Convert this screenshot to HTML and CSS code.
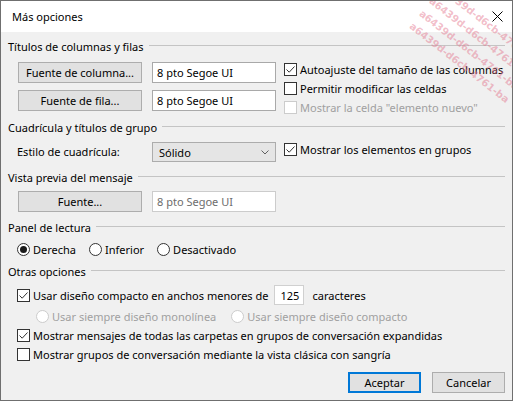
FILE: index.html
```html
<!DOCTYPE html>
<html lang="es">
<head>
<meta charset="utf-8">
<title>Más opciones</title>
<link rel="stylesheet" href="styles.css">
</head>
<body>
<div class="window">
  <div class="titlebar">
    <span class="title">Más opciones</span>
    <svg class="close" width="11" height="11" viewBox="0 0 11 11"><path d="M0.5 0.5 L10.5 10.5 M10.5 0.5 L0.5 10.5" stroke="#000" stroke-width="1" fill="none"/></svg>
  </div>
  <div class="content">
    <div class="group-h h1"><span>Títulos de columnas y filas</span><i class="rule"></i></div>
    <div class="sec1">
      <div class="fontgrid">
        <div class="btn">Fuente de columna...</div>
        <div class="tb">8 pto Segoe UI</div>
        <div class="btn">Fuente de fila...</div>
        <div class="tb">8 pto Segoe UI</div>
      </div>
      <div class="checks">
        <div class="chk"><span class="box"><svg viewBox="0 0 11 11" width="11" height="11"><polyline points="1.5,5.5 4.2,8.2 9.5,2.5" fill="none" stroke="#333" stroke-width="1"/></svg></span>Autoajuste del tamaño de las columnas</div>
        <div class="chk"><span class="box"></span>Permitir modificar las celdas</div>
        <div class="chk disabled"><span class="box"></span>Mostrar la celda "elemento nuevo"</div>
      </div>
    </div>

    <div class="group-h h2"><span>Cuadrícula y títulos de grupo</span><i class="rule"></i></div>
    <div class="sec2">
      <span class="lbl">Estilo de cuadrícula:</span>
      <div class="combo"><span>Sólido</span><svg width="8" height="5" viewBox="0 0 8 5"><polyline points="0.5,0.5 4,4 7.5,0.5" fill="none" stroke="#606060" stroke-width="1"/></svg></div>
      <div class="chk"><span class="box"><svg viewBox="0 0 11 11" width="11" height="11"><polyline points="1.5,5.5 4.2,8.2 9.5,2.5" fill="none" stroke="#333" stroke-width="1"/></svg></span>Mostrar los elementos en grupos</div>
    </div>

    <div class="group-h h3"><span>Vista previa del mensaje</span><i class="rule"></i></div>
    <div class="sec3">
      <div class="btn">Fuente...</div>
      <div class="tb tb-dis">8 pto Segoe UI</div>
    </div>

    <div class="group-h h4"><span>Panel de lectura</span><i class="rule"></i></div>
    <div class="radios">
      <div class="rad"><span class="circle on"></span>Derecha</div>
      <div class="rad"><span class="circle"></span>Inferior</div>
      <div class="rad"><span class="circle"></span>Desactivado</div>
    </div>

    <div class="group-h h5"><span>Otras opciones</span><i class="rule"></i></div>
    <div class="compact">
      <div class="chk"><span class="box"><svg viewBox="0 0 11 11" width="11" height="11"><polyline points="1.5,5.5 4.2,8.2 9.5,2.5" fill="none" stroke="#333" stroke-width="1"/></svg></span>Usar diseño compacto en anchos menores de</div>
      <div class="num">125</div>
      <span class="unit">caracteres</span>
    </div>
    <div class="radios sub">
      <div class="rad disabled"><span class="circle"></span>Usar siempre diseño monolínea</div>
      <div class="rad disabled"><span class="circle"></span>Usar siempre diseño compacto</div>
    </div>
    <div class="chk row"><span class="box"><svg viewBox="0 0 11 11" width="11" height="11"><polyline points="1.5,5.5 4.2,8.2 9.5,2.5" fill="none" stroke="#333" stroke-width="1"/></svg></span>Mostrar mensajes de todas las carpetas en grupos de conversación expandidas</div>
    <div class="chk row"><span class="box"></span>Mostrar grupos de conversación mediante la vista clásica con sangría</div>

    <div class="actions">
      <div class="btn btn-def">Aceptar</div>
      <div class="btn btn-act">Cancelar</div>
    </div>
  </div>
  <div class="watermark">
    <div>a6439d-d6cb-4761-ba</div>
    <div>a6439d-d6cb-4761-ba</div>
    <div>a6439d-d6cb-4761-ba</div>
    <div>a6439d-d6cb-4761-ba</div>
  </div>
</div>
</body>
</html>
```

FILE: styles.css
```css
* { box-sizing: border-box; }

body {
  margin: 0;
  background: #ffffff;
  font-family: "Noto Sans", "Open Sans", sans-serif;
  font-size: 11px;
  color: #000;
}

.window {
  width: 513px;
  height: 401px;
  border: 1px solid #6f6f6f;
  background: #f0f0f0;
  position: relative;
  overflow: hidden;
  display: flex;
  flex-direction: column;
}

.titlebar {
  flex: none;
  height: 31px;
  background: #fff;
  display: flex;
  align-items: center;
  padding-left: 11px;
}

.title { font-size: 11px; }

.close { margin-left: auto; margin-right: 9px; }

.content {
  flex: 1;
  padding: 0 7px;
}

.group-h {
  display: flex;
  align-items: center;
  height: 16px;
  line-height: 16px;
  white-space: nowrap;
}

.group-h .rule {
  flex: 1;
  height: 1px;
  background: #c4c4c4;
  margin: 0 0 3px 5px;
}

.h1 { margin-top: 7px; }
.h2 { margin-top: 3px; }
.h3 { margin-top: 8px; }
.h4 { margin-top: 8px; }
.h5 { margin-top: 5px; }

.btn {
  height: 21px;
  background: #e1e1e1;
  border: 1px solid #adadad;
  display: flex;
  align-items: center;
  justify-content: center;
  white-space: nowrap;
}

.tb {
  height: 21px;
  background: #fff;
  border: 1px solid #a9a9a9;
  display: flex;
  align-items: center;
  padding-left: 4px;
  white-space: nowrap;
}

.tb-dis { border-color: #cccccc; color: #6d6d6d; }

.sec1 { display: flex; }

.fontgrid {
  display: grid;
  grid-template-columns: 124px 124px;
  column-gap: 10px;
  row-gap: 7px;
  margin-top: 7px;
  padding-left: 10px;
  align-self: flex-start;
}

.checks {
  margin-top: 5px;
  margin-left: 8px;
}

.chk {
  display: flex;
  align-items: center;
  height: 19px;
  white-space: nowrap;
}

.box {
  width: 13px;
  height: 13px;
  border: 1px solid #333;
  background: #fff;
  margin-right: 3px;
  flex: none;
  display: flex;
  align-items: center;
  justify-content: center;
}

.chk.disabled { color: #a0a0a0; }
.chk.disabled .box { border-color: #cccccc; }

.sec2 {
  display: flex;
  align-items: flex-start;
  margin-top: 6px;
  height: 20px;
}

.sec2 .lbl {
  width: 144px;
  padding-left: 9px;
  line-height: 20px;
}

.combo {
  width: 124px;
  height: 20px;
  background: #e5e5e5;
  border: 1px solid #acacac;
  display: flex;
  align-items: center;
  justify-content: space-between;
  padding: 0 6px 0 6px;
}

.sec2 .chk { margin-left: 8px; margin-top: -2px; }

.sec3 {
  display: flex;
  margin-top: 5px;
  padding-left: 10px;
  gap: 10px;
}
.sec3 .btn, .sec3 .tb { width: 124px; }

.radios {
  display: flex;
  margin-top: 4px;
  padding-left: 9px;
  gap: 13px;
  height: 19px;
}

.rad {
  display: flex;
  align-items: center;
  white-space: nowrap;
}

.circle {
  width: 13px;
  height: 13px;
  border: 1px solid #333;
  border-radius: 50%;
  background: #fff;
  margin-right: 3px;
  display: flex;
  align-items: center;
  justify-content: center;
}

.circle.on::after {
  content: "";
  width: 7px;
  height: 7px;
  border-radius: 50%;
  background: #1a1a1a;
}

.rad.disabled { color: #a0a0a0; }
.rad.disabled .circle { border-color: #cccccc; }

.radios.sub {
  margin-top: 2px;
  padding-left: 28px;
  gap: 15px;
}

.compact {
  display: flex;
  align-items: center;
  margin-top: 5px;
  height: 20px;
  padding-left: 9px;
}

.num {
  width: 30px;
  height: 20px;
  background: #fff;
  border: 1px solid #d0d0d0;
  margin-left: 6px;
  display: flex;
  align-items: center;
  padding-left: 5px;
}

.unit { margin-left: 8px; }

.chk.row { padding-left: 9px; }

.actions {
  display: flex;
  justify-content: flex-end;
  gap: 11px;
  margin-top: 8px;
}

.actions .btn { width: 73px; }

.btn-def { border: 2px solid #0078d7; }

.watermark {
  position: absolute;
  left: 444px;
  top: -20px;
  transform: rotate(38deg);
  transform-origin: 0 0;
  color: rgba(226, 110, 135, 0.45);
  font-family: "DejaVu Sans", sans-serif;
  font-weight: bold;
  font-size: 10px;
  line-height: 16px;
  white-space: nowrap;
  pointer-events: none;
}
```
